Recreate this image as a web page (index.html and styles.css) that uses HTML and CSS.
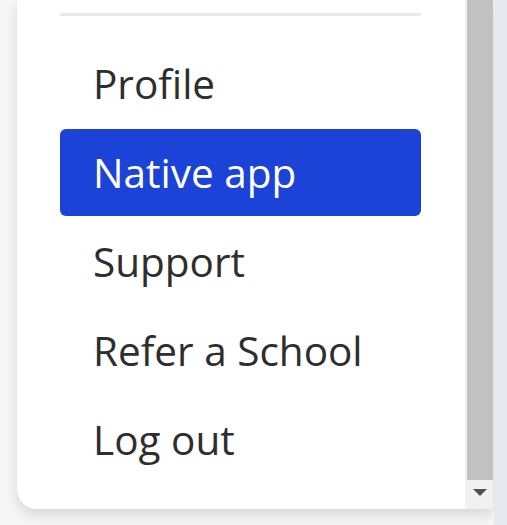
FILE: index.html
```html
<!DOCTYPE html>
<html>
<head>
    <title>Menu</title>
    <link rel="stylesheet" href="styles.css">
</head>
<body>
    <div class="page">
        <div class="panel">
            <div class="menu">
                <div class="divider"></div>
                <a class="item" href="#">Profile</a>
                <a class="item active" href="#">Native app</a>
                <a class="item" href="#">Support</a>
                <a class="item" href="#">Refer a School</a>
                <a class="item" href="#">Log out</a>
            </div>
            <div class="scrollbar">
                <div class="thumb"></div>
                <div class="arrow">
                    <svg width="14" height="8" viewBox="0 0 14 8"><path d="M0 0H14L7 7Z" fill="#505050"/></svg>
                </div>
            </div>
        </div>
        <div class="edge"></div>
    </div>
</body>
</html>
```

FILE: styles.css
```css
body {
    margin: 0;
    background: #f6f6f7;
    font-family: "Open Sans", "Noto Sans", sans-serif;
    overflow: hidden;
}
.page {
    display: flex;
    height: 525px;
}
.panel {
    display: flex;
    width: 476px;
    height: 509px;
    margin-left: 17px;
    background: #fff;
    border-radius: 0 0 0 20px;
    box-shadow: 0 6px 14px rgba(0, 0, 0, 0.13);
    overflow: hidden;
}
.menu {
    flex: 1;
    display: flex;
    flex-direction: column;
    gap: 2px;
    padding: 13px 44px 0 43px;
}
.divider {
    height: 3px;
    background: #e9e9e9;
    border-radius: 2px;
    margin-bottom: 22px;
}
.item {
    display: flex;
    align-items: center;
    height: 87px;
    padding-left: 33px;
    font-size: 40.5px;
    color: #2e2e2e;
    text-decoration: none;
    border-radius: 6px;
}
.active {
    background: #1b43d8;
    color: #fff;
}
.scrollbar {
    width: 28px;
    display: flex;
    flex-direction: column;
    background: #f1f1f1;
}
.thumb {
    height: 480px;
    margin-left: 2px;
    background: #c1c1c1;
}
.arrow {
    display: flex;
    justify-content: center;
    padding-top: 9px;
    padding-left: 2px;
}
.edge {
    width: 13px;
    margin-left: 1px;
    background: #e8e9ee;
}
```
